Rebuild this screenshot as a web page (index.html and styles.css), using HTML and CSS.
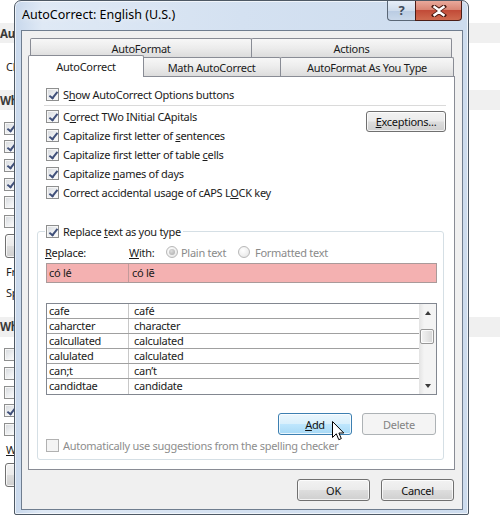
FILE: index.html
```html
<!DOCTYPE html>
<html>
<head>
<meta charset="utf-8">
<title>AutoCorrect: English (U.S.)</title>
<link rel="stylesheet" href="styles.css">
</head>
<body>
<div class="bg">
  <div class="band">Aut</div>
  <div class="bgline tall">Ch</div>
  <div class="band">Wh</div>
  <div class="bggroup g1">
    <div class="bgcb"><span class="cb on"></span></div>
    <div class="bgcb"><span class="cb on"></span></div>
    <div class="bgcb"><span class="cb on"></span></div>
    <div class="bgcb"><span class="cb on"></span></div>
    <div class="bgcb"><span class="cb"></span></div>
    <div class="bgcb"><span class="cb"></span></div>
  </div>
  <div class="bgbtn"><span class="btn"></span></div>
  <div class="bgline">Fr</div>
  <div class="bgline">Sp</div>
  <div class="band b3">Wh</div>
  <div class="bggroup g2">
    <div class="bgcb"><span class="cb"></span></div>
    <div class="bgcb"><span class="cb"></span></div>
    <div class="bgcb"><span class="cb"></span></div>
    <div class="bgcb"><span class="cb on"></span></div>
    <div class="bgcb"><span class="cb"></span></div>
  </div>
  <div class="bgline"><u>W</u></div>
  <div class="bgbtn"><span class="btn"></span></div>
</div>

<div class="dlg">
  <div class="titlebar">
    <div class="title">AutoCorrect: English (U.S.)</div>
    <div class="capbtns">
      <div class="cap help">?</div>
      <div class="cap close">
        <svg width="16" height="12" viewBox="0 0 16 12">
          <path d="M3 1.5 L8 5 L13 1.5 M3 10.5 L8 7 L13 10.5" stroke="#4a1a12" stroke-width="4.2" fill="none" stroke-linecap="square"/>
          <path d="M3.5 2 L8 5.3 L12.5 2 M3.5 10 L8 6.7 L12.5 10 M8 5.3 L8 6.7" stroke="#ffffff" stroke-width="2.4" fill="none" stroke-linecap="square"/>
        </svg>
      </div>
    </div>
  </div>
  <div class="client">
    <div class="tabrow back">
      <div class="tab t-af"><span>AutoFormat</span></div>
      <div class="tab t-act"><span>Actions</span></div>
    </div>
    <div class="tabrow front">
      <div class="tab t-ac sel"><span>AutoCorrect</span></div>
      <div class="tab t-math"><span>Math AutoCorrect</span></div>
      <div class="tab t-afy"><span>AutoFormat As You Type</span></div>
    </div>
    <div class="panel">
      <div class="cbrow first"><span class="cb on"></span><span>S<u>h</u>ow AutoCorrect Options buttons</span></div>
      <div class="sep"></div>
      <div class="opts">
        <div class="optcol">
          <div class="cbrow"><span class="cb on"></span><span>C<u>o</u>rrect TWo INitial CApitals</span></div>
          <div class="cbrow"><span class="cb on"></span><span>Capitalize first letter of <u>s</u>entences</span></div>
          <div class="cbrow"><span class="cb on"></span><span>Capitalize first letter of table <u>c</u>ells</span></div>
          <div class="cbrow"><span class="cb on"></span><span>Capitalize <u>n</u>ames of days</span></div>
          <div class="cbrow"><span class="cb on"></span><span>Correct accidental usage of cAPS L<u>O</u>CK key</span></div>
        </div>
        <div class="btn exc"><span><u>E</u>xceptions...</span></div>
      </div>
      <div class="group">
        <div class="legend"><span class="cb on"></span><span>Replace <u>t</u>ext as you type</span></div>
        <div class="labels">
          <span class="lbl-r"><u>R</u>eplace:</span>
          <span class="lbl-w"><u>W</u>ith:</span>
          <span class="radio on"></span><span class="dis-t pt">Plain text</span>
          <span class="radio"></span><span class="dis-t ft">Formatted text</span>
        </div>
        <div class="entry"><div class="c1"><span>có lé</span></div><div class="c2"><span>có lẽ</span></div></div>
        <div class="list">
          <div class="rows">
            <div class="row"><div class="c1">cafe</div><div class="c2">café</div></div>
            <div class="row"><div class="c1">caharcter</div><div class="c2">character</div></div>
            <div class="row"><div class="c1">calcullated</div><div class="c2">calculated</div></div>
            <div class="row"><div class="c1">calulated</div><div class="c2">calculated</div></div>
            <div class="row"><div class="c1">can;t</div><div class="c2">can’t</div></div>
            <div class="row last"><div class="c1">candidtae</div><div class="c2">candidate</div></div>
          </div>
          <div class="sb">
            <div class="sbarrow"><span class="tri up"></span></div>
            <div class="sbtrack"><div class="thumb"></div></div>
            <div class="sbarrow"><span class="tri down"></span></div>
          </div>
        </div>
        <div class="gbtns">
          <div class="btn hot"><span><u>A</u>dd</span></div>
          <div class="btn off"><span>Delete</span></div>
        </div>
        <div class="cbrow disrow"><span class="cb dis"></span><span>Automatically use suggestions from the spelling checker</span></div>
      </div>
    </div>
    <div class="footer">
      <div class="btn"><span>OK</span></div>
      <div class="btn"><span>Cancel</span></div>
    </div>
  </div>
</div>

<svg class="cursor" width="13" height="20" viewBox="0 0 13 20">
  <path d="M0.5 0.5 L0.5 16.5 L4.3 12.8 L6.8 18.7 L9.3 17.6 L6.9 12 L11.8 12 Z" fill="#ffffff" stroke="#000000" stroke-width="1" stroke-linejoin="miter"/>
</svg>
</body>
</html>
```

FILE: styles.css
```css
* { box-sizing: border-box; }
html, body { margin: 0; padding: 0; }
body {
  width: 500px;
  height: 516px;
  overflow: hidden;
  position: relative;
  background: #ffffff;
  font-family: "Noto Sans", "Open Sans", sans-serif;
  font-size: 11px;
  letter-spacing: -0.28px;
  color: #1b1b1b;
}
u { text-decoration: underline; text-underline-offset: 1px; }

/* ---------- background Word Options page (left strip visible) ---------- */
.bg { display: flex; flex-direction: column; padding-top: 23px; white-space: nowrap; }
.band {
  height: 20px;
  background: #f0f0f0;
  display: flex;
  align-items: center;
  font-weight: 700;
  color: #3a3a3a;
  font-size: 11.5px;
}
.bgline { height: 21px; display: flex; align-items: center; padding-left: 6px; }
.bgline.tall { height: 47px; }
.bggroup { display: flex; flex-direction: column; }
.bggroup.g1 { padding-top: 9px; }
.bggroup.g2 { padding-top: 9px; }
.bgcb { height: 18.6px; display: flex; align-items: center; padding-left: 4px; }
.bgbtn { height: 30px; display: flex; align-items: center; padding-left: 5px; }
.bgbtn .btn { width: 40px; height: 24px; flex: none; }
.band.b3 { margin-top: 14px; }

/* ---------- dialog frame ---------- */
.dlg {
  position: absolute;
  left: 14px;
  top: 0;
  width: 455px;
  height: 515px;
  border: 1px solid #4e5965;
  border-radius: 7px 7px 2px 2px;
  background: linear-gradient(90deg, #c8d8ec 0%, #dfe9f5 6%, #d4e1f1 50%, #cddcee 100%);
  box-shadow: inset 0 0 0 1px rgba(255,255,255,0.65);
  padding: 0 5px 4px 6px;
  display: flex;
  flex-direction: column;
}
.titlebar {
  height: 29px;
  display: flex;
  align-items: flex-start;
  flex: none;
}
.title {
  font-size: 12.5px;
  letter-spacing: 0;
  color: #000;
  padding-left: 1px;
  margin-top: 5px;
  line-height: 18px;
  text-shadow: 0 0 6px rgba(255,255,255,0.9);
}
.capbtns { margin-left: auto; margin-right: 1px; display: flex; }
.cap {
  height: 20px;
  border: 1px solid #5a6776;
  border-top: none;
  display: flex;
  align-items: center;
  justify-content: center;
}
.help {
  width: 28px;
  border-radius: 0 0 0 4px;
  background: linear-gradient(#e6eef8 0%, #cfdcec 50%, #b9cbe2 51%, #c9d8ea 100%);
  color: #3e4a5a;
  font-size: 13px;
  font-weight: 700;
  line-height: 1;
  border-right: none;
}
.close {
  width: 47px;
  border-color: #4b1d16;
  border-radius: 0 0 4px 0;
  background: linear-gradient(#e9a99b 0%, #d98675 45%, #c24b38 50%, #cf6a4f 100%);
}

/* ---------- client area ---------- */
.client {
  flex: 1;
  border: 1px solid #6f7d8f;
  background: #f0f0f0;
  padding: 6px 7px 0 6px;
  display: flex;
  flex-direction: column;
}
.tabrow { display: flex; height: 19px; padding-left: 2px; flex: none; }
.tab {
  height: 19px;
  border: 1px solid #898c95;
  border-bottom: none;
  border-radius: 2px 2px 0 0;
  background: linear-gradient(#f7f7f7 0%, #ececec 50%, #dcdcdc 100%);
  display: flex;
  align-items: center;
  justify-content: center;
  padding-top: 2px;
  white-space: nowrap;
  line-height: 14px;
}
.tabrow.back { margin-top: 1px; }
.t-af { width: 222px; }
.t-act { width: 201px; margin-left: -1px; }
.t-ac { width: 116px; }
.t-math { width: 139px; margin-left: -1px; }
.t-afy { width: 174px; margin-left: -1px; }
.tab.sel {
  position: relative;
  z-index: 2;
  background: #ffffff;
  height: 22px;
  margin-top: -2px;
  margin-left: -2px;
  margin-right: -2px;
  padding-top: 0;
}
.tab.sel + .tab { margin-left: 0; }

.panel {
  height: 394px;
  flex: none;
  border: 1px solid #898c95;
  background: #ffffff;
  padding: 8px 8px 0 17px;
  display: flex;
  flex-direction: column;
}
.cbrow {
  height: 19px;
  display: flex;
  align-items: center;
  white-space: nowrap;
}
.sep { height: 1px; background: #dadada; margin: 1px 0 1px -2px; }
.opts { display: flex; align-items: flex-start; }
.optcol { display: flex; flex-direction: column; }
.btn {
  border: 1px solid #707070;
  border-radius: 3px;
  background: linear-gradient(#f2f2f2 0%, #ebebeb 48%, #dddddd 52%, #cfcfcf 100%);
  box-shadow: inset 0 0 0 1px rgba(255,255,255,0.75);
  display: flex;
  align-items: center;
  justify-content: center;
  white-space: nowrap;
  color: #111;
}
.exc { margin-left: auto; margin-top: 4px; width: 80px; height: 21px; }

/* checkbox */
.cb {
  width: 13px;
  height: 13px;
  flex: none;
  border: 1px solid #8e8f8f;
  background: linear-gradient(135deg, #d5d8dc 0%, #eef0f2 55%, #fdfdfd 100%);
  box-shadow: inset 0 0 0 1px #f6f6f6;
  position: relative;
  margin-right: 4px;
}
.cb.on::after {
  content: "";
  position: absolute;
  left: 3.6px;
  top: 0.5px;
  width: 3px;
  height: 7px;
  border: solid #40507a;
  border-width: 0 2px 2px 0;
  transform: rotate(38deg);
}
.cb.dis { border-color: #b1b1b1; background: #f4f4f4; box-shadow: none; }

/* group box */
.group {
  margin: 29px 0 0 -9px;
  width: 407px;
  height: 229px;
  border: 1px solid #d5dfe5;
  border-radius: 3px;
  display: flex;
  flex-direction: column;
  padding: 0 6px 0 7px;
}
.legend {
  margin-top: -10px;
  align-self: flex-start;
  height: 19px;
  display: flex;
  align-items: center;
  background: #ffffff;
  padding: 0 2px 0 1px;
  margin-left: 0;
  white-space: nowrap;
}
.labels { height: 20px; margin-top: 1px; display: flex; align-items: center; white-space: nowrap; }
.lbl-r { width: 84px; }
.lbl-w { width: 37px; }
.radio {
  width: 12px;
  height: 12px;
  flex: none;
  border-radius: 50%;
  border: 1px solid #b8b8b8;
  background: radial-gradient(circle at 40% 35%, #ffffff 0%, #eeeeee 60%, #dddddd 100%);
  display: flex;
  align-items: center;
  justify-content: center;
}
.radio.on::after {
  content: "";
  width: 6px;
  height: 6px;
  border-radius: 50%;
  background: radial-gradient(circle at 40% 35%, #dcdcdc 0%, #a8a8a8 100%);
}
.dis-t { color: #8a8a8a; }
.pt { width: 60px; padding-left: 3px; }
.ft { padding-left: 5px; }

.entry {
  margin: 1px 0 0 1px;
  width: 391px;
  height: 20px;
  border: 1px solid #a99a9a;
  background: #f4b1b1;
  display: flex;
  align-items: stretch;
  line-height: 14px;
}
.entry .c1 { width: 82px; border-right: 1px solid #c29a9a; padding-left: 2px; display: flex; align-items: center; }
.entry .c2 { padding-left: 3px; display: flex; align-items: center; }

.list {
  margin: 20px 0 0 1px;
  width: 391px;
  height: 92px;
  border: 1px solid #828790;
  display: flex;
  background: #fff;
}
.rows { flex: 1; display: flex; flex-direction: column; }
.row { height: 15px; display: flex; border-bottom: 1px solid #a0a0a0; line-height: 14px; }
.row.last { border-bottom: none; }
.row .c1 { width: 82px; border-right: 1px solid #c8c8c8; padding-left: 2px; }
.row .c2 { padding-left: 5px; }
.sb {
  width: 17px;
  display: flex;
  flex-direction: column;
  background: linear-gradient(90deg, #e3e3e3 0%, #f4f4f4 30%, #f4f4f4 100%);
}
.sbarrow { height: 17px; display: flex; align-items: center; justify-content: center; }
.tri { width: 0; height: 0; border-left: 3.5px solid transparent; border-right: 3.5px solid transparent; }
.tri.up { border-bottom: 4px solid #3b3b3b; }
.tri.down { border-top: 4px solid #3b3b3b; }
.sbtrack { flex: 1; padding: 8px 2px 0 1px; }
.thumb {
  height: 15px;
  border: 1px solid #979797;
  border-radius: 2px;
  background: linear-gradient(90deg, #f3f3f3 0%, #e6e6e6 50%, #d6d6d6 100%);
  box-shadow: inset 0 0 0 1px rgba(255,255,255,0.8);
}

.gbtns { display: flex; justify-content: flex-end; gap: 10px; margin-top: 18px; padding-right: 1px; }
.gbtns .btn { width: 74px; height: 22px; }
.btn.hot {
  border-color: #3c7fb1;
  background: linear-gradient(#eaf6fd 0%, #d9f0fc 48%, #bee6fd 52%, #a7d9f5 100%);
}
.btn.off { border-color: #adb2b5; background: #f4f4f4; box-shadow: none; color: #838383; }
.disrow { margin-top: 1px; padding-left: 1px; color: #8d8d8d; }

.footer { display: flex; justify-content: flex-end; gap: 11px; margin-top: 9px; padding-right: 1px; }
.footer .btn { width: 73px; height: 22px; }

.cursor { position: absolute; left: 332px; top: 421px; }
```
